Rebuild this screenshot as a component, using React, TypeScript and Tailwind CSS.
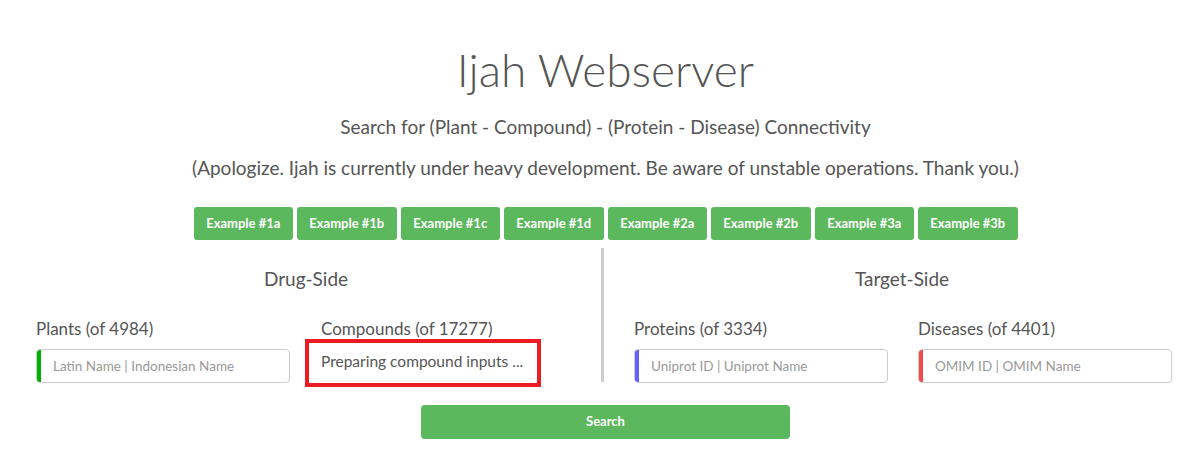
import React from 'react'

const examples = ['#1a', '#1b', '#1c', '#1d', '#2a', '#2b', '#3a', '#3b']

function Field({
  label,
  placeholder,
  bar,
}: {
  label: string
  placeholder: string
  bar: string
}) {
  return (
    <div className="w-[285px] px-[15px]">
      <div className="mt-[25px] h-[24px] text-[17px] leading-[24px]">{label}</div>
      <div className="mt-[8px] flex h-[34px] w-[254px] overflow-hidden rounded-[4px] border border-[#ccc]">
        <div className={`w-[4px] ${bar}`} />
        <input
          className="min-w-0 flex-1 px-[12px] text-[13.5px] text-[#555] outline-none placeholder:text-[#999]"
          placeholder={placeholder}
        />
      </div>
    </div>
  )
}

export default function App() {
  return (
    <div className="min-h-screen bg-white font-['Lato','Liberation_Sans',sans-serif] text-[#555]">
      {/* Header */}
      <div className="pl-[23px] text-center">
        <h1 className="pt-[42px] text-[46px] font-light leading-[56px]">Ijah Webserver</h1>
        <p className="mt-[16px] text-[19px] leading-[26px]">
          Search for (Plant - Compound) - (Protein - Disease) Connectivity
        </p>
        <p className="mt-[14px] text-[19px] leading-[28px]">
          (Apologize. Ijah is currently under heavy development. Be aware of unstable operations. Thank you.)
        </p>

        <div className="mt-[25px] flex justify-center gap-[4px]">
          {examples.map((e) => (
            <button
              key={e}
              className="h-[33px] w-[99.5px] rounded-[3px] bg-[#5cb85c] text-[13px] font-bold text-white"
            >
              Example {e}
            </button>
          ))}
        </div>
      </div>

      {/* Sides */}
      <div className="mt-[8px] flex pl-[21px]">
        <div className="w-[570px]">
          <h3 className="pt-[18px] text-center text-[19px] leading-[26px]">Drug-Side</h3>
          <div className="flex">
            <Field label="Plants (of 4984)" placeholder="Latin Name | Indonesian Name" bar="bg-[#00b300]" />
            <div className="w-[285px] px-[15px]">
              <div className="mt-[25px] h-[24px] text-[17px] leading-[24px]">Compounds (of 17277)</div>
              <div className="ml-[-16px] mt-[-2px] flex h-[48px] w-[236px] items-center border-4 border-[#ed1c24] pb-[3px] pl-[12px] text-[15.5px]">
                Preparing compound inputs ...
              </div>
            </div>
          </div>
        </div>

        <div className="ml-[10px] h-[134px] w-[3px] bg-[#ccc]" />

        <div className="ml-[15px] w-[566px]">
          <h3 className="pt-[18px] text-center text-[19px] leading-[26px]">Target-Side</h3>
          <div className="flex">
            <Field label="Proteins (of 3334)" placeholder="Uniprot ID | Uniprot Name" bar="bg-[#6262ff]" />
            <Field label="Diseases (of 4401)" placeholder="OMIM ID | OMIM Name" bar="bg-[#f24a4a]" />
          </div>
        </div>
      </div>

      <div className="pl-[23px]">
        <button className="mx-auto mt-[18px] block h-[34px] w-[369px] rounded-[4px] bg-[#5cb85c] text-[13px] font-bold text-white">
          Search
        </button>
      </div>
    </div>
  )
}
